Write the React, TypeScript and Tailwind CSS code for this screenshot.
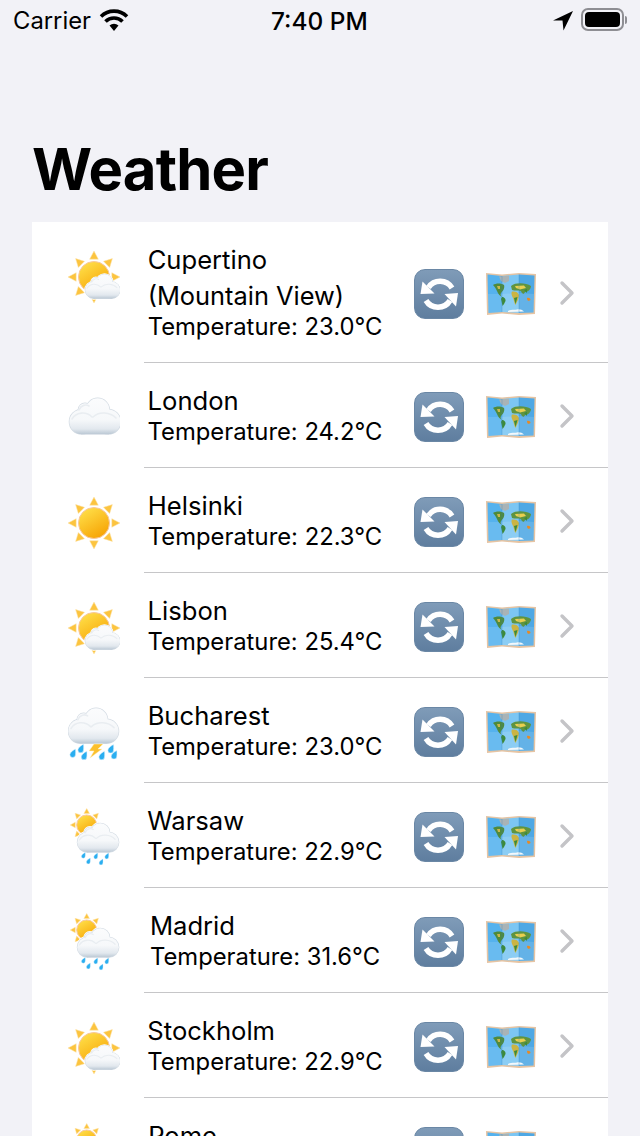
import React from "react";

const font = { fontFamily: "Inter, 'Liberation Sans', sans-serif" };

function Lobes() {
  return (
    <>
      <circle cx="12.7" cy="23.7" r="12.3" />
      <circle cx="28.7" cy="12" r="11.7" />
      <circle cx="16" cy="12" r="6.7" />
      <circle cx="39.3" cy="23.7" r="12.3" />
      <rect x="12.7" y="14" width="26.6" height="22" />
    </>
  );
}

function Cloud({ x, y, s }: { x: number; y: number; s: number }) {
  const id = `c${Math.round(x * 10)}${Math.round(y * 10)}`;
  return (
    <g transform={`translate(${x} ${y}) scale(${s})`}>
      <defs>
        <linearGradient id={id} gradientUnits="userSpaceOnUse" x1="0" y1="0" x2="0" y2="36">
          <stop offset="0" stopColor="#fbfcfd" />
          <stop offset="0.6" stopColor="#f6f8fa" />
          <stop offset="0.86" stopColor="#e2e8ee" />
          <stop offset="1" stopColor="#bcc9d5" />
        </linearGradient>
      </defs>
      <g stroke="#ffffff" strokeWidth="3" fill="#fff">
        <Lobes />
      </g>
      <g stroke="#d3dbe3" strokeWidth="1.4" fill="#d3dbe3">
        <Lobes />
      </g>
      <g fill={`url(#${id})`}>
        <Lobes />
      </g>
      <path d="M3 21 C7 14 17 13 23 19 M24 19 C30 13 41 14 47 20 M10 12 C12 7 17 6 20 8" fill="none" stroke="#e9edf1" strokeWidth="1.6" strokeLinecap="round" />
    </g>
  );
}

function Sun({ cx, cy, r, tip }: { cx: number; cy: number; r: number; tip: number }) {
  const id = `s${Math.round(r)}`;
  const base = r + (tip - r) * 0.22;
  const half = r * 0.28;
  return (
    <g>
      <defs>
        <linearGradient id={id} x1="0.2" y1="0" x2="0.8" y2="1">
          <stop offset="0" stopColor="#ffe04a" />
          <stop offset="1" stopColor="#f6a000" />
        </linearGradient>
      </defs>
      {[0, 45, 90, 135, 180, 225, 270, 315].map((a) => (
        <polygon
          key={a}
          transform={`rotate(${a} ${cx} ${cy})`}
          points={`${cx},${cy - tip} ${cx - half},${cy - base} ${cx + half},${cy - base}`}
          fill="#fcc43f"
          stroke="#fde2a8"
          strokeWidth="0.5"
        />
      ))}
      <circle cx={cx} cy={cy} r={r} fill={`url(#${id})`} stroke="#f8c79c" strokeWidth="1" />
    </g>
  );
}

function Drop({ x, y, s = 1 }: { x: number; y: number; s?: number }) {
  return (
    <path
      transform={`translate(${x} ${y}) scale(${s})`}
      d="M3 -4 C3 -4 -3 -1 -3 2 A3 3 0 0 0 3 2 C3.4 0 3 -4 3 -4 Z"
      fill="#2aaef0"
      stroke="#dff3fd"
      strokeWidth="0.6"
    />
  );
}

function WeatherIcon({ kind }: { kind: string }) {
  return (
    <svg width="52" height="60" viewBox="0 0 52 60" className="block shrink-0">
      {kind === "sun" && <Sun cx={26} cy={30} r={15.5} tip={26} />}
      {kind === "sunCloud" && (
        <>
          <Sun cx={26} cy={30} r={15.5} tip={26} />
          <Cloud x={17} y={27} s={0.68} />
        </>
      )}
      {kind === "cloud" && <Cloud x={1} y={10} s={1} />}
      {kind === "storm" && (
        <>
          <Cloud x={0} y={5} s={0.98} />
          <polygon points="26,41 35,41 30,46 34,46 22,55 26,48 21,48" fill="#fbc02d" stroke="#fff3c4" strokeWidth="0.5" />
          {[[4.7, 49.7], [12.7, 45], [16, 52], [33.7, 52], [42.7, 45.3], [46, 51.3]].map(([x, y]) => (
            <Drop key={x} x={x} y={y} s={0.95} />
          ))}
        </>
      )}
      {kind === "sunRain" && (
        <>
          <Sun cx={18.7} cy={17} r={10} tip={16.5} />
          <Cloud x={9} y={15} s={0.81} />
          {[[15.3, 47], [20.3, 52.7], [27.7, 47.7], [33, 53.7], [38.7, 47.7]].map(([x, y]) => (
            <Drop key={x} x={x} y={y} s={0.65} />
          ))}
        </>
      )}
    </svg>
  );
}

function RefreshIcon() {
  return (
    <div className="w-[50px] h-[50px] rounded-[11px] bg-gradient-to-b from-[#7f9bb8] to-[#5f7e9f] shrink-0 border border-[#6a87a5]">
      <svg width="48" height="48" viewBox="1 1 48 48" className="block">
        <path d="M14.5 18.5 A14 14 0 0 1 38 19" fill="none" stroke="#fff" strokeWidth="5.5" />
        <polygon points="6.5,25 20.5,24.5 8.5,12.5" fill="#fff" />
        <path d="M36 31.5 A14 14 0 0 1 12 31.5" fill="none" stroke="#fff" strokeWidth="5.5" />
        <polygon points="44,24 30.5,25 42,37.5" fill="#fff" />
      </svg>
    </div>
  );
}

function MapIcon() {
  return (
    <svg width="50" height="44" viewBox="0 0 50 44" className="block shrink-0">
      <polygon points="0,1 16,2.500 33,1 50,2 49,42 33,43 16,41.500 1,43" fill="#e6c4a3" />
      <polygon points="1.500,2.500 16,4 16,40 2.500,41" fill="#55b2ee" />
      <polygon points="16,4 33,2.500 33,41 16,40" fill="#7cc6f3" />
      <polygon points="33,2.500 48.500,3.500 47.500,40.500 33,41" fill="#4fa8e4" />
      <polygon points="2,22 16,22 33,21 48,22 47.500,40.500 33,41 16,40 2.500,41" fill="#ffffff" opacity="0.12" />
      <path d="M13 4.500 L23 3.800 L23 9 L19 11 L15 9 Z" fill="#a9b3b6" />
      <path d="M7 13 C10 11 15 11 18 13 C19 16 17 19 15 21 C14 23 15 24 16 25 C14 24 12 22 11 19 C10 17 9 15 7 13 Z" fill="#4f8a3c" />
      <path d="M11 14 L14 14 L14 17 L12 17 Z" fill="#c9b84a" />
      <path d="M16 25 C18 25 20 27 19.500 29 C18.500 31 17.500 33 16.500 34 C16 31 15.500 29 15 27 Z" fill="#3e8a3a" />
      <path d="M25 14 C30 10 40 11 45 14 C45 17 42 20 39 20 C38 23 36 22 35 19 C32 18 29 19 26 18 Z" fill="#5f9440" />
      <path d="M29 14 L38 13.500 L40 16 L34 17.500 L30 16 Z" fill="#e8cf50" />
      <path d="M26 19.500 C29 19 32 20 33 23 C33 26 31 30 29.500 33 C28 31 28 27 26.500 25 C25.500 23 25 21 26 19.500 Z" fill="#cbb443" />
      <path d="M28 26 L31.500 25 L29.500 32 Z" fill="#3e8a3a" />
      <path d="M38 18 L41 17 L41 21 Z" fill="#3e8a3a" />
      <path d="M41 26 C42.500 25.500 44.500 26 44.500 28 C43 29.500 41 29 41 26 Z" fill="#e88a25" />
      <path d="M22 39 C25 37 28 38 31 37.500 C34 37 36 38 38 39.500 L22 40 Z" fill="#f3f8fb" />
      <rect x="15.500" y="4" width="1" height="36" fill="#2f7fb8" opacity="0.3" />
      <rect x="32.500" y="2.500" width="1" height="38.500" fill="#2f7fb8" opacity="0.3" />
    </svg>
  );
}

function Row({ kind, name, extra, temp, last }: { kind: string; name: string; extra?: string; temp: string; last?: boolean }) {
  return (
    <div>
      <div className={`flex ${extra ? "h-[140px]" : "h-[104px]"}`}>
        <div className="ml-[36px] mt-[25px] self-start">
          <WeatherIcon kind={kind} />
        </div>
        <div className="ml-[24px] w-[242px] pt-[20px] flex justify-center shrink-0">
          <div className="text-black">
            <div className="text-[25.6px] leading-[36px] whitespace-nowrap">{name}</div>
            {extra && <div className="text-[25.4px] leading-[36px] whitespace-nowrap">{extra}</div>}
            <div className="text-[23.8px] leading-[25px] whitespace-nowrap">{temp}</div>
          </div>
        </div>
        <div className="ml-[28px] mt-[4px] self-center flex items-center">
          <RefreshIcon />
          <div className="ml-[22px]">
            <MapIcon />
          </div>
          <svg width="16" height="26" viewBox="0 0 16 26" className="ml-[23px] -mt-[3px] block">
            <polyline points="3,3 13,13 3,23" fill="none" stroke="#c4c4c7" strokeWidth="3.4" strokeLinecap="round" strokeLinejoin="round" />
          </svg>
        </div>
      </div>
      {!last && <div className="ml-[112px] h-px bg-[#c6c6c8]" />}
    </div>
  );
}

export default function App() {
  return (
    <div className="w-[640px] h-[1136px] overflow-hidden bg-[#f2f2f7] text-black" style={font}>
      <div className="h-[42px] flex items-center relative">
        <div className="ml-[13px] text-[23.8px] leading-none">Carrier</div>
        <svg width="32" height="24" viewBox="0 0 32 24" className="ml-[7px] -mt-[3px] block">
          <path d="M16 23 L11.500 17.500 A7 7 0 0 1 20.500 17.500 Z" fill="#000" />
          <path d="M7.500 13.500 A12 12 0 0 1 24.500 13.500" fill="none" stroke="#000" strokeWidth="3.6" />
          <path d="M3 8.500 A18.500 18.500 0 0 1 29 8.500" fill="none" stroke="#000" strokeWidth="3.6" />
        </svg>
        <div className="absolute left-[271px] top-[9px] text-[24.4px] leading-[24px] font-medium">7:40 PM</div>
        <svg width="22" height="20" viewBox="0 0 22 20" className="absolute left-[552px] top-[11px] block">
          <polygon points="21,0 1,9.500 10.500,9.500 11.500,19.500" fill="#000" />
        </svg>
        <div className="absolute left-[581px] top-[8px] w-[43px] h-[23px] rounded-[7px] border-2 border-[#8e8e93] p-[2px]">
          <div className="w-full h-full rounded-[4px] bg-black" />
        </div>
        <div className="absolute left-[625px] top-[16px] w-[2px] h-[8px] rounded-r-sm bg-[#8e8e93]" />
      </div>
      <h1 className="ml-[32px] mt-[93px] mb-[19px] text-[58px] leading-[68px] font-bold tracking-[-0.8px]">Weather</h1>
      <div className="mx-[32px] bg-white">
        <Row kind="sunCloud" name="Cupertino" extra="(Mountain View)" temp="Temperature: 23.0°C" />
        <Row kind="cloud" name="London" temp="Temperature: 24.2°C" />
        <Row kind="sun" name="Helsinki" temp="Temperature: 22.3°C" />
        <Row kind="sunCloud" name="Lisbon" temp="Temperature: 25.4°C" />
        <Row kind="storm" name="Bucharest" temp="Temperature: 23.0°C" />
        <Row kind="sunRain" name="Warsaw" temp="Temperature: 22.9°C" />
        <Row kind="sunRain" name="Madrid" temp="Temperature: 31.6°C" />
        <Row kind="sunCloud" name="Stockholm" temp="Temperature: 22.9°C" />
        <Row kind="sunRain" name="Rome" temp="Temperature: 24.7°C" last />
      </div>
    </div>
  );
}
